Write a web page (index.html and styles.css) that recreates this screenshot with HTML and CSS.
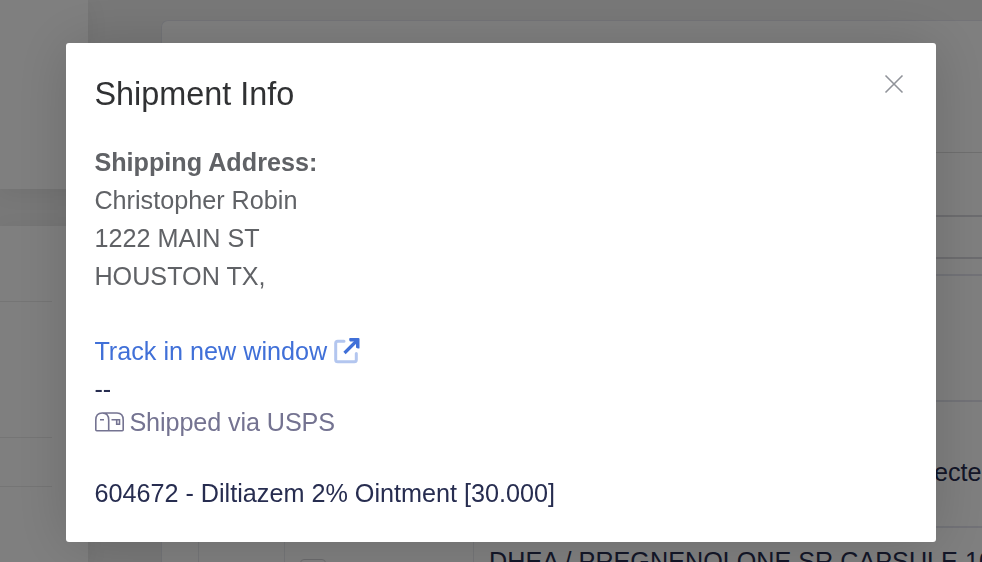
FILE: index.html
```html
<!DOCTYPE html>
<html lang="en">
<head>
<meta charset="utf-8">
<title>Shipment Info</title>
<link rel="stylesheet" href="styles.css">
</head>
<body>
<div class="page">
  <aside class="sidebar">
    <section class="side-card side-card-top"></section>
    <section class="side-card side-card-list">
      <div class="side-row side-row-first"></div>
      <div class="side-row side-row-tall"></div>
      <div class="side-row side-row-short"></div>
    </section>
  </aside>
  <main class="main-card">
    <div class="band band-title"></div>
    <div class="band band-tabs"></div>
    <div class="band band-filter"></div>
    <div class="band band-gap"></div>
    <div class="band band-head"></div>
    <div class="band band-order"><span>ecte</span></div>
    <div class="item-row">
      <div class="cell cell-pad"></div>
      <div class="cell cell-expand"></div>
      <div class="cell cell-check"><span class="checkbox"></span></div>
      <div class="cell-name">DHEA / PREGNENOLONE SR CAPSULE 10</div>
    </div>
  </main>
</div>
<div class="overlay">
  <div class="dialog" role="dialog">
    <header class="dialog-header">
      <h1>Shipment Info</h1>
      <svg class="close" viewBox="0 0 20 20"><path d="M1.5 1.5 18.5 18.5M18.5 1.5 1.5 18.5"/></svg>
    </header>
    <div class="address">
      <strong>Shipping Address:</strong>
      <div>Christopher Robin</div>
      <div>1222 MAIN ST</div>
      <div>HOUSTON TX,</div>
    </div>
    <a class="track"><span>Track in new window</span>
      <svg class="external" viewBox="0 0 26 26"><path class="frame" d="M10 3.200H3.700Q1.700 3.200 1.700 5.200V21.700Q1.700 23.700 3.700 23.700H20.300Q22.300 23.700 22.300 21.700V15.500"/><path class="arrow" d="M10.500 15 22.500 3"/><path class="tip" d="M15.500 0H24.500Q25.500 0 25.500 1V10.300Q23.500 11 22 9.500V5.500L20.300 3.500H16Q14.500 2 15.500 0Z"/></svg>
    </a>
    <div class="number">--</div>
    <div class="carrier">
      <svg class="mailbox" viewBox="0 0 29 20"><path d="M.8 17.800V8Q.8 1 7.200 1H22Q28.200 1 28.200 8V17.800Q28.200 18.800 27.200 18.800H1.800Q.8 18.800.8 17.800M7.200 1Q13.700 1 13.700 8V18.800M5 7.800H9M16.500 7.800H24.500V12.300H21.700V7.800"/></svg>
      <span>Shipped via USPS</span>
    </div>
    <div class="item">604672 - Diltiazem 2% Ointment [30.000]</div>
  </div>
</div>
</body>
</html>
```
FILE: styles.css
```css
* { box-sizing: border-box; }
body {
  margin: 0;
  width: 982px;
  height: 562px;
  overflow: hidden;
  background: #f0f0f0;
  color: #272d50;
  font: 25.2px/37.8px "Liberation Sans", Arial, sans-serif;
}
.page { display: flex; gap: 73px; height: 562px; overflow: hidden; }
.sidebar { flex: 0 0 88px; display: flex; flex-direction: column; gap: 37px; }
.side-card { background: #fff; box-shadow: 0 4px 22px rgba(0, 0, 0, .06); }
.side-card-top { height: 189px; flex: none; }
.side-card-list { flex: 1; }
.side-row { width: 52px; border-bottom: 1px solid #ebebeb; }
.side-row-first { height: 76px; }
.side-row-tall { height: 136px; }
.side-row-short { height: 49px; }
.main-card {
  flex: 1;
  height: 600px;
  margin-top: 20px;
  background: #fff;
  border: 1px solid #e6e7ef;
  border-right: 0;
  border-radius: 7px 0 0 0;
}
.band { border-bottom: 2px solid #e4e5ee; }
.band-title { height: 132px; border-bottom: 1px solid #dedede; }
.band-tabs { height: 64px; border-color: #d9d9de; }
.band-filter { height: 42px; border-color: #d9d9de; }
.band-gap { height: 17px; }
.band-head { height: 126px; }
.band-order { height: 126px; padding: 52px 0 0 772px; }
.item-row { display: flex; height: 70px; white-space: nowrap; }
.cell { border-right: 1px solid #eaebf0; }
.cell-pad { width: 37px; }
.cell-expand { width: 86px; }
.cell-check { width: 189px; padding: 31px 0 0 15px; }
.checkbox { display: block; width: 26px; height: 26px; border: 1px solid #d5d6da; border-radius: 4px; }
.cell-name { padding: 15px 0 0 15px; }
.overlay {
  position: fixed;
  inset: 0;
  padding: 43px 46px 20px 66px;
  background: rgba(0, 0, 0, .5);
}
.dialog {
  width: 870px;
  height: 499px;
  padding: 29.800px 28.800px 20px 28.400px;
  background: #fff;
  border-radius: 3px;
  box-shadow: 0 2px 56px rgba(0, 0, 0, .16);
}
.dialog-header { display: flex; justify-content: space-between; height: 71.600px; }
h1 { margin: 0; font-size: 32.400px; line-height: 43.200px; font-weight: 400; color: #303133; }
.close { width: 20px; height: 20px; margin: 1.200px 3.200px 0 0; fill: none; stroke: #909399; stroke-width: 1.600; }
.address { color: #606266; }
.address strong { display: block; }
.track { display: flex; margin-top: 37.800px; color: #4070d8; }
.external { width: 26px; height: 26px; margin: 5px 0 0 6.500px; }
.frame { fill: none; stroke: #b3c6ef; stroke-width: 3; stroke-linecap: round; }
.arrow { fill: none; stroke: #4070d8; stroke-width: 3.200; }
.tip { fill: #4070d8; }
.carrier { display: flex; height: 66.500px; line-height: 26px; color: #747391; letter-spacing: -.1px; }
.mailbox { width: 29px; height: 20px; margin: 3.300px 5.400px 0 .6px; fill: none; stroke: #747391; stroke-width: 1.600; }
```
